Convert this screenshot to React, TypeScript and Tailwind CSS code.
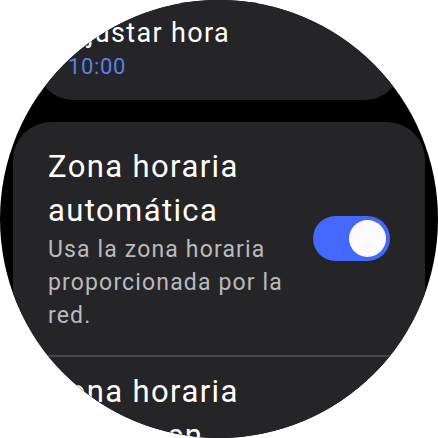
import React from "react";

const font = { fontFamily: "Roboto, 'Noto Sans', sans-serif" };

function Toggle({ on }: { on: boolean }) {
  return (
    <div
      className={`w-[77px] h-[45px] shrink-0 rounded-full flex items-center px-[4px] ${
        on ? "bg-[#4468fc] justify-end" : "bg-[#5c5c60] justify-start"
      }`}
    >
      <div className="w-[37px] h-[37px] rounded-full bg-[#fbfbff]"></div>
    </div>
  );
}

export default function App() {
  return (
    <div className="w-[438px] h-[438px] bg-white">
      <div
        className="w-full h-full rounded-full overflow-hidden bg-black flex flex-col"
        style={font}
      >
        {/* ajustar hora (escalado, ya arriba del todo) */}
        <div className="-mt-[20px] mx-[37px] rounded-[36px] bg-[#252528] pl-[31px] pt-[36px] pb-[17px] shrink-0">
          <p className="text-[27px] leading-[34px] tracking-[0.05em] text-white">
            Ajustar hora
          </p>
          <p className="text-[22px] leading-[33px] tracking-[0.03em] text-[#5b7fe8]">
            10:00
          </p>
        </div>

        <div className="mt-[22px] mx-[13px] rounded-t-[38px] bg-[#252528] shrink-0">
          <div className="flex items-center px-[35px] py-[23px]">
            <div className="w-[256px]">
              <p className="text-[31px] leading-[44px] tracking-[0.045em] text-white">
                Zona horaria automática
              </p>
              <p className="text-[23px] leading-[33px] tracking-[0.05em] text-[#bababe]">
                Usa la zona horaria proporcionada por la red.
              </p>
            </div>
            <div className="ml-auto">
              <Toggle on={true} />
            </div>
          </div>
          <div className="h-[2px] bg-[#47474b]"></div>
          <div className="px-[35px] pt-[13px]">
            <p className="text-[31px] leading-[44px] tracking-[0.045em] text-white w-[256px]">
              Zona horaria basada en ubicación
            </p>
          </div>
        </div>
      </div>
    </div>
  );
}
